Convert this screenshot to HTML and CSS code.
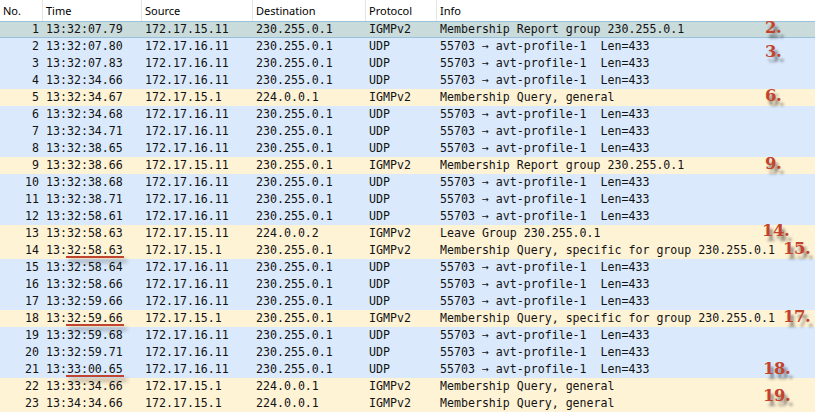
FILE: index.html
```html
<!DOCTYPE html>
<html>
<head>
<meta charset="utf-8">
<link rel="stylesheet" href="styles.css">
</head>
<body>
<div class="list">
  <div class="head">
    <div class="hc">No.</div>
    <div class="hc">Time</div>
    <div class="hc">Source</div>
    <div class="hc">Destination</div>
    <div class="hc">Protocol</div>
    <div class="hc">Info</div>
  </div>
  <div class="row igmp sel"><span class="no">1</span><span>13:32:07.79</span><span>172.17.15.11</span><span>230.255.0.1</span><span>IGMPv2</span><span>Membership Report group 230.255.0.1</span></div>
  <div class="row udp"><span class="no">2</span><span>13:32:07.80</span><span>172.17.16.11</span><span>230.255.0.1</span><span>UDP</span><span>55703 → avt-profile-1  Len=433</span></div>
  <div class="row udp"><span class="no">3</span><span>13:32:07.83</span><span>172.17.16.11</span><span>230.255.0.1</span><span>UDP</span><span>55703 → avt-profile-1  Len=433</span></div>
  <div class="row udp"><span class="no">4</span><span>13:32:34.66</span><span>172.17.16.11</span><span>230.255.0.1</span><span>UDP</span><span>55703 → avt-profile-1  Len=433</span></div>
  <div class="row igmp"><span class="no">5</span><span>13:32:34.67</span><span>172.17.15.1</span><span>224.0.0.1</span><span>IGMPv2</span><span>Membership Query, general</span></div>
  <div class="row udp"><span class="no">6</span><span>13:32:34.68</span><span>172.17.16.11</span><span>230.255.0.1</span><span>UDP</span><span>55703 → avt-profile-1  Len=433</span></div>
  <div class="row udp"><span class="no">7</span><span>13:32:34.71</span><span>172.17.16.11</span><span>230.255.0.1</span><span>UDP</span><span>55703 → avt-profile-1  Len=433</span></div>
  <div class="row udp"><span class="no">8</span><span>13:32:38.65</span><span>172.17.16.11</span><span>230.255.0.1</span><span>UDP</span><span>55703 → avt-profile-1  Len=433</span></div>
  <div class="row igmp"><span class="no">9</span><span>13:32:38.66</span><span>172.17.15.11</span><span>230.255.0.1</span><span>IGMPv2</span><span>Membership Report group 230.255.0.1</span></div>
  <div class="row udp"><span class="no">10</span><span>13:32:38.68</span><span>172.17.16.11</span><span>230.255.0.1</span><span>UDP</span><span>55703 → avt-profile-1  Len=433</span></div>
  <div class="row udp"><span class="no">11</span><span>13:32:38.71</span><span>172.17.16.11</span><span>230.255.0.1</span><span>UDP</span><span>55703 → avt-profile-1  Len=433</span></div>
  <div class="row udp"><span class="no">12</span><span>13:32:58.61</span><span>172.17.16.11</span><span>230.255.0.1</span><span>UDP</span><span>55703 → avt-profile-1  Len=433</span></div>
  <div class="row igmp"><span class="no">13</span><span>13:32:58.63</span><span>172.17.15.11</span><span>224.0.0.2</span><span>IGMPv2</span><span>Leave Group 230.255.0.1</span></div>
  <div class="row igmp"><span class="no">14</span><span class="tm">13:<u class="mark">32:58.63</u></span><span>172.17.15.1</span><span>230.255.0.1</span><span>IGMPv2</span><span>Membership Query, specific for group 230.255.0.1</span></div>
  <div class="row udp"><span class="no">15</span><span>13:32:58.64</span><span>172.17.16.11</span><span>230.255.0.1</span><span>UDP</span><span>55703 → avt-profile-1  Len=433</span></div>
  <div class="row udp"><span class="no">16</span><span>13:32:58.66</span><span>172.17.16.11</span><span>230.255.0.1</span><span>UDP</span><span>55703 → avt-profile-1  Len=433</span></div>
  <div class="row udp"><span class="no">17</span><span>13:32:59.66</span><span>172.17.16.11</span><span>230.255.0.1</span><span>UDP</span><span>55703 → avt-profile-1  Len=433</span></div>
  <div class="row igmp"><span class="no">18</span><span class="tm">13:<u class="mark">32:59.66</u></span><span>172.17.15.1</span><span>230.255.0.1</span><span>IGMPv2</span><span>Membership Query, specific for group 230.255.0.1</span></div>
  <div class="row udp"><span class="no">19</span><span>13:32:59.68</span><span>172.17.16.11</span><span>230.255.0.1</span><span>UDP</span><span>55703 → avt-profile-1  Len=433</span></div>
  <div class="row udp"><span class="no">20</span><span>13:32:59.71</span><span>172.17.16.11</span><span>230.255.0.1</span><span>UDP</span><span>55703 → avt-profile-1  Len=433</span></div>
  <div class="row udp"><span class="no">21</span><span class="tm">13:<u class="mark">33:00.65</u></span><span>172.17.16.11</span><span>230.255.0.1</span><span>UDP</span><span>55703 → avt-profile-1  Len=433</span></div>
  <div class="row igmp"><span class="no">22</span><span>13:33:34.66</span><span>172.17.15.1</span><span>224.0.0.1</span><span>IGMPv2</span><span>Membership Query, general</span></div>
  <div class="row igmp"><span class="no">23</span><span>13:34:34.66</span><span>172.17.15.1</span><span>224.0.0.1</span><span>IGMPv2</span><span>Membership Query, general</span></div>

  <span class="note n2">2.</span>
  <span class="note n3">3.</span>
  <span class="note n6">6.</span>
  <span class="note n9">9.</span>
  <span class="note n14">14.</span>
  <span class="note n15">15.</span>
  <span class="note n17">17.</span>
  <span class="note n18">18.</span>
  <span class="note n19">19.</span>
</div>
</body>
</html>
```
FILE: styles.css
```css
html, body {
  margin: 0;
  padding: 0;
  background: #ffffff;
}

.list {
  position: relative;
  width: 815px;
  height: 412px;
  overflow: hidden;
}

.head {
  display: grid;
  grid-template-columns: 42px 99px 111px 113px 71px 1fr;
  height: 21px;
  background: #ffffff;
  font-family: "Noto Sans", "Open Sans", sans-serif;
  font-size: 11px;
  color: #000;
}

.hc {
  display: flex;
  align-items: center;
  padding-left: 3px;
  padding-bottom: 1px;
  border-left: 1px solid #e5e5e5;
}

.hc:first-child {
  border-left: none;
  padding-left: 3px;
}

.row {
  display: grid;
  grid-template-columns: 42px 99px 111px 113px 71px 1fr;
  height: 17px;
  align-items: center;
  font-family: "DejaVu Sans Mono", monospace;
  font-size: 11.6px;
  color: #121212;
  white-space: pre;
  box-sizing: border-box;
}

.row span {
  padding-left: 4px;
  line-height: 17px;
}

.row .no {
  padding-left: 0;
  padding-right: 3px;
  text-align: right;
}

.udp {
  background: #daeafc;
}

.igmp {
  background: #fff3d6;
}

.row.sel {
  background: #c9dbdb;
  box-shadow: inset 0 1px 0 #99c1dc, inset 0 -1px 0 #99c1dc;
}

.mark {
  text-decoration: none;
  position: relative;
}

.mark::after {
  content: "";
  position: absolute;
  left: -1px;
  right: -1px;
  bottom: -1px;
  height: 2px;
  background: #c0442e;
  box-shadow: 3px 4px 4px rgba(0, 0, 0, 0.45);
}

.note {
  position: absolute;
  font-family: "DejaVu Serif", "Liberation Serif", serif;
  font-weight: bold;
  font-size: 16.5px;
  line-height: 16.5px;
  letter-spacing: -0.5px;
  color: #c4432d;
  text-shadow: 3px 5px 3px rgba(0, 0, 0, 0.45);
}

.n2 { left: 765px; top: 20px; }
.n3 { left: 765px; top: 44px; }
.n6 { left: 765px; top: 88px; }
.n9 { left: 765px; top: 156px; }
.n14 { left: 762px; top: 223px; }
.n15 { left: 783px; top: 241px; }
.n17 { left: 783px; top: 309px; }
.n18 { left: 763px; top: 361px; }
.n19 { left: 763px; top: 388px; }
```
